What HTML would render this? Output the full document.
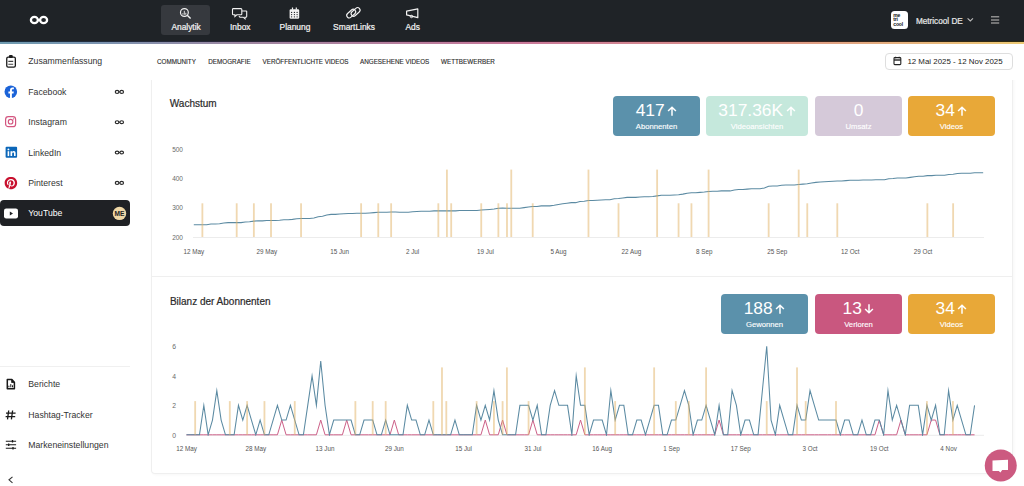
<!DOCTYPE html>
<html><head><meta charset="utf-8">
<style>
*{box-sizing:border-box;margin:0;padding:0}
html,body{width:1024px;height:486px;overflow:hidden;background:#fff;font-family:"Liberation Sans",sans-serif;color:#222}
.a{position:absolute;white-space:nowrap}
#hdr{position:absolute;left:0;top:0;width:1024px;height:41px;background:#1f2327}
#hl1{position:absolute;left:0;top:41px;width:1024px;height:1px;background:linear-gradient(90deg,#1c3142,#2e2436 30%,#3a2030 50%,#3a2424 75%,#2e2a10)}
#hl2{position:absolute;left:0;top:42px;width:1024px;height:2px;background:linear-gradient(90deg,#6f9bb0 0%,#7b93b0 10%,#9e86a1 24%,#c8789a 50%,#dc9388 74%,#ecc974 100%)}
.nav{color:#f2f2f2;font-weight:400;font-size:8.4px;line-height:8px;-webkit-text-stroke:0.22px #f2f2f2}
.side{font-size:8.7px;line-height:10px;color:#333}
.tab{font-size:6.3px;line-height:9px;color:#2a2a2a;letter-spacing:0;-webkit-text-stroke:0.12px #2a2a2a}
.stat{position:absolute;border-radius:4px;color:#fff;text-align:center}
.stat .n{position:absolute;left:0;right:0;top:5.5px;font-size:17.4px;line-height:17px;display:flex;justify-content:center;align-items:center}
.stat .n svg{margin-left:2.6px;margin-top:1px}
.stat .l{position:absolute;left:0;right:0;top:25.5px;font-size:7.7px;line-height:9px;-webkit-text-stroke:0.12px #fff}
svg text{font-family:"Liberation Sans",sans-serif}
</style></head><body>
<div id="hdr"></div><div id="hl1"></div><div id="hl2"></div>
<!-- logo -->
<svg class="a" style="left:0;top:0" width="60" height="41">
<ellipse cx="34.4" cy="20" rx="3.5" ry="3.05" fill="none" stroke="#fff" stroke-width="2.3"/>
<ellipse cx="43.6" cy="20" rx="3.5" ry="3.05" fill="none" stroke="#fff" stroke-width="2.3"/>
<rect x="37.5" y="19" width="3" height="2" fill="#fff"/>
</svg>
<!-- nav -->
<div class="a" style="left:161px;top:5px;width:49px;height:30px;border-radius:3px;background:#36393e"></div>
<svg class="a" style="left:150px;top:0" width="290" height="41" fill="none" stroke="#f2f2f2" stroke-width="1.1">
 <circle cx="34.4" cy="12.5" r="3.9" stroke-width="1.2"/><path d="M37.2 15.3L40.6 18.6" stroke-width="1.4"/>
 <path d="M32.9 14.6v-1.4M34.3 14.8v-4M35.8 14.8v-2" stroke-width="0.9"/>
 <path d="M83.3 8.6h7.7a0.8 0.8 0 0 1 .8.8v4.6a0.8 0.8 0 0 1-.8.8h-4.2l-1.9 1.7v-1.7h-1.6a0.8 0.8 0 0 1-.8-.8v-4.6a0.8 0.8 0 0 1 .8-.8z"/><path d="M91.9 11h4.2a0.6 0.6 0 0 1 .6.6v5a0.6 0.6 0 0 1-.6.6h-1.1v1.6l-1.8-1.6h-3.3l-1-1"/>
 <rect x="139.6" y="9.2" width="9.6" height="9.6" rx="1.2" fill="#f2f2f2" stroke="none"/>
 <path d="M142.5 7.6v2.2M146.3 7.6v2.2" stroke-width="1.2"/>
 <g fill="#1f2327" stroke="none"><circle cx="141.6" cy="12.4" r="0.65"/><circle cx="144.4" cy="12.4" r="0.65"/><circle cx="147.1" cy="12.4" r="0.65"/><circle cx="141.6" cy="14.6" r="0.65"/><circle cx="144.4" cy="14.6" r="0.65"/><circle cx="147.1" cy="14.6" r="0.65"/><circle cx="141.6" cy="16.8" r="0.65"/><circle cx="144.4" cy="16.8" r="0.65"/><circle cx="147.1" cy="16.8" r="0.65"/></g>
 <rect x="-5.1" y="-2.5" width="10.2" height="5" rx="2.5" transform="translate(201.2 13.6) rotate(-42)" stroke-width="1.15"/>
 <rect x="-5.1" y="-2.5" width="10.2" height="5" rx="2.5" transform="translate(205.6 11.9) rotate(-42)" stroke-width="1.15"/>
 <path d="M256.6 11.2L267.8 8.8V17.7L256.6 14.9Z" stroke-width="1.2" stroke-linejoin="round"/><circle cx="261.5" cy="16.5" r="1.2" stroke-width="1"/>
</svg>
<div class="a nav" style="left:171.4px;top:23px">Analytik</div>
<div class="a nav" style="left:230px;top:23px">Inbox</div>
<div class="a nav" style="left:279.6px;top:23px">Planung</div>
<div class="a nav" style="left:333.1px;top:23px">SmartLinks</div>
<div class="a nav" style="left:405.4px;top:23px">Ads</div>
<!-- right header -->
<div class="a" style="left:891px;top:11px;width:17px;height:18px;border-radius:3.5px;background:#fff"></div>
<div class="a" style="left:893.3px;top:12.6px;font-size:5px;line-height:4.6px;font-weight:700;color:#111;white-space:normal;width:14px;letter-spacing:-0.15px">me<br>tri<br>cool</div>
<div class="a nav" style="left:915.9px;top:17.5px;font-size:8.2px;color:#e6e6e6;-webkit-text-stroke:0.22px #e6e6e6">Metricool DE</div>
<svg class="a" style="left:960px;top:10px" width="50" height="20" fill="none" stroke="#bdbdbd" stroke-width="1">
 <path d="M7.6 8.3l2.7 2.6 2.7-2.6" stroke-width="1.1"/>
 <path d="M31 6.8h8.2M31 10h8.2M31 12.9h8.2" stroke="#8e8e8e" stroke-width="1.5"/>
</svg>
<!-- sidebar -->
<svg class="a" style="left:0;top:48px" width="140" height="420">
 <!-- clipboard -->
 <g fill="none" stroke="#1a1a1a" stroke-width="1.3"><rect x="6.75" y="9.1" width="8.6" height="10" rx="1.4"/><path d="M8.3 13.4h4.9M8.3 16.2h4.9" stroke-width="1.1" stroke="#444"/></g>
 <rect x="8.9" y="7" width="3.9" height="3" rx="1.2" fill="#1a1a1a"/>
 <!-- facebook -->
 <circle cx="10.8" cy="43.7" r="6.3" fill="#1b63d8"/>
 <path d="M11.9 50v-4.6h1.6l.3-1.9h-1.9v-1.2c0-.6.3-1 1.1-1h.9v-1.7c-.3 0-.9-.1-1.5-.1-1.5 0-2.4.9-2.4 2.5v1.5h-1.6v1.9h1.6V50z" fill="#fff"/>
 <!-- instagram -->
 <rect x="5.6" y="68.7" width="10" height="10" rx="2.8" fill="none" stroke="#d3557f" stroke-width="1.2"/>
 <circle cx="10.6" cy="73.7" r="2.3" fill="none" stroke="#d3557f" stroke-width="1.1"/>
 <circle cx="13.5" cy="70.9" r="0.6" fill="#d3557f"/>
 <!-- linkedin -->
 <rect x="5.6" y="98.7" width="11.5" height="11" rx="1" fill="#0b66b8"/>
 <path d="M7.6 103.2h1.6v4.9H7.6z" fill="#fff"/><circle cx="8.4" cy="101.4" r="0.95" fill="#fff"/>
 <path d="M10.5 103.2h1.5v.7c.3-.5.9-.85 1.7-.85 1.3 0 1.9.8 1.9 2.2v2.85h-1.6v-2.6c0-.7-.25-1.1-.85-1.1s-1 .4-1 1.1v2.6h-1.65z" fill="#fff"/>
 <!-- pinterest -->
 <circle cx="10.9" cy="135" r="6" fill="#fff"/>
 <path transform="translate(4.6 128.7) scale(0.525)" fill="#c8102e" d="M12.017 0C5.396 0 .029 5.367.029 11.987c0 5.079 3.158 9.417 7.618 11.162-.105-.949-.199-2.403.041-3.439.219-.937 1.406-5.957 1.406-5.957s-.359-.72-.359-1.781c0-1.663.967-2.911 2.168-2.911 1.024 0 1.518.769 1.518 1.688 0 1.029-.653 2.567-.992 3.992-.285 1.193.6 2.165 1.775 2.165 2.128 0 3.768-2.245 3.768-5.487 0-2.861-2.063-4.869-5.008-4.869-3.41 0-5.409 2.562-5.409 5.199 0 1.033.394 2.143.889 2.741.099.12.112.225.085.345-.09.375-.293 1.199-.334 1.363-.053.225-.172.271-.401.165-1.495-.69-2.433-2.878-2.433-4.646 0-3.776 2.748-7.252 7.920-7.252 4.158 0 7.392 2.967 7.392 6.923 0 4.135-2.607 7.462-6.233 7.462-1.214 0-2.354-.629-2.758-1.379l-.749 2.848c-.269 1.045-1.004 2.352-1.498 3.146 1.123.345 2.306.535 3.55.535 6.607 0 11.985-5.365 11.985-11.987C23.97 5.39 18.592.026 11.985.026L12.017 0z"/>
</svg>
<div class="a side" style="left:28.3px;top:56px">Zusammenfassung</div>
<div class="a side" style="left:28.3px;top:87px">Facebook</div>
<div class="a side" style="left:28.3px;top:117px">Instagram</div>
<div class="a side" style="left:28.3px;top:148px">LinkedIn</div>
<div class="a side" style="left:28.3px;top:178px">Pinterest</div>
<svg class="a" style="left:110px;top:80px" width="20" height="110" fill="none" stroke="#2b2b2b" stroke-width="1.2"><ellipse cx="7.1" cy="11.9" rx="1.8" ry="1.45"/><ellipse cx="11.7" cy="11.9" rx="1.8" ry="1.45"/><path d="M8.9 11.9h1" stroke-width="1"/><ellipse cx="7.1" cy="42.2" rx="1.8" ry="1.45"/><ellipse cx="11.7" cy="42.2" rx="1.8" ry="1.45"/><path d="M8.9 42.2h1" stroke-width="1"/><ellipse cx="7.1" cy="72.5" rx="1.8" ry="1.45"/><ellipse cx="11.7" cy="72.5" rx="1.8" ry="1.45"/><path d="M8.9 72.5h1" stroke-width="1"/><ellipse cx="7.1" cy="102.9" rx="1.8" ry="1.45"/><ellipse cx="11.7" cy="102.9" rx="1.8" ry="1.45"/><path d="M8.9 102.9h1" stroke-width="1"/></svg>
<div class="a" style="left:0;top:200px;width:130px;height:26px;border-radius:4px;background:#1f2125"></div>
<svg class="a" style="left:0;top:200px" width="130" height="26">
 <rect x="4" y="8.4" width="14" height="10" rx="2.2" fill="#fff"/>
 <path d="M9.8 11.4v4l3.2-2z" fill="#1f2125"/>
 <circle cx="119.5" cy="13.4" r="6.7" fill="#efd7a6"/>
 <text x="119.5" y="15.9" font-size="6.6" font-weight="700" fill="#222" text-anchor="middle">ME</text>
</svg>
<div class="a side" style="left:28.3px;top:208px;color:#fff">YouTube</div>
<div class="a" style="left:0;top:366px;width:130px;height:1px;background:#f0f0f0"></div>
<svg class="a" style="left:0;top:370px" width="30" height="116" fill="none" stroke="#1a1a1a" stroke-width="1.2">
 <path d="M7.3 9.6h4.6l2.5 2.6v6.6h-7.1z" stroke-width="1.5" stroke-linejoin="round"/><path d="M11.6 9.6v2.9h2.8z" fill="#1a1a1a" stroke-width="0.8"/><path d="M8.9 17.3v-1.6M10.8 17.3v-3.2M12.5 17.3v-2" stroke-width="1"/>
 <path d="M8.7 40.5l-1.2 8.8M12.6 40.5l-1.2 8.8M6 43.2h9.6M5.6 46.6h9.6" stroke-width="1.3"/>
 <path d="M5.8 71.3h10.3M5.8 74.8h10.3M5.8 78.2h10.3" stroke-width="1.1"/>
 <path d="M12.5 70v2.6M8.7 73.5v2.6M13 77v2.6" stroke-width="1.3"/>
 <path d="M12.5 106.8l-3.5 3 3.5 3" stroke="#333" stroke-width="1.1"/>
</svg>
<div class="a side" style="left:28.3px;top:379px">Berichte</div>
<div class="a side" style="left:28.3px;top:410px">Hashtag-Tracker</div>
<div class="a side" style="left:28.3px;top:440px">Markeneinstellungen</div>
<!-- tabs -->
<div class="a tab" style="left:157px;top:57px">COMMUNITY</div>
<div class="a tab" style="left:208.3px;top:57px">DEMOGRAFIE</div>
<div class="a tab" style="left:262.5px;top:57px">VERÖFFENTLICHTE VIDEOS</div>
<div class="a tab" style="left:360px;top:57px">ANGESEHENE VIDEOS</div>
<div class="a tab" style="left:441px;top:57px">WETTBEWERBER</div>
<!-- date picker -->
<div class="a" style="left:885px;top:53px;width:128px;height:17px;border:1px solid #dedede;border-radius:4px;background:#fff"></div>
<svg class="a" style="left:890px;top:53px" width="16" height="17" fill="none" stroke="#222" stroke-width="1.1">
 <rect x="4" y="4.6" width="6.8" height="7" rx="0.8"/><path d="M4 7h6.8" stroke-width="1.4"/><path d="M5.6 3.7v1.6M9.2 3.7v1.6"/>
</svg>
<div class="a" style="left:907.4px;top:56.5px;font-size:7.9px;line-height:10px;color:#222">12 Mai 2025 - 12 Nov 2025</div>
<!-- card -->
<div class="a" style="left:151px;top:60px;width:862px;height:414px;border:1px solid #efefef;border-top:none;border-radius:0 0 4px 4px;background:transparent;box-shadow:1px 1px 3px rgba(0,0,0,0.035);clip-path:inset(20px -6px -6px -6px)"></div>
<div class="a" style="left:152px;top:276px;width:860px;height:1px;background:#efefef"></div>
<div class="a" style="left:169.8px;top:97.5px;font-size:10px;line-height:12px;color:#2a2a2a;-webkit-text-stroke:0.2px #2a2a2a">Wachstum</div>
<div class="a" style="left:169.9px;top:295.5px;font-size:10px;line-height:12px;color:#2a2a2a;-webkit-text-stroke:0.2px #2a2a2a">Bilanz der Abonnenten</div>
<!-- stats row 1 -->
<div class="stat" style="left:613px;top:96px;width:87px;height:40px;background:#5b91ab"><div class="n">417<svg width="10" height="10" viewBox="0 0 10 10" fill="none" stroke="#fff" stroke-width="1.5"><path d="M5 9.8V1.2M1.1 5l3.9-3.8 3.9 3.8"/></svg></div><div class="l">Abonnenten</div></div>
<div class="stat" style="left:706px;top:96px;width:102px;height:40px;background:#c5e8dc"><div class="n">317.36K<svg width="10" height="10" viewBox="0 0 10 10" fill="none" stroke="#fff" stroke-width="1.5"><path d="M5 9.8V1.2M1.1 5l3.9-3.8 3.9 3.8"/></svg></div><div class="l">Videoansichten</div></div>
<div class="stat" style="left:815px;top:96px;width:87px;height:40px;background:#d5c9d9"><div class="n">0</div><div class="l">Umsatz</div></div>
<div class="stat" style="left:908px;top:96px;width:87px;height:40px;background:#e8a838"><div class="n">34<svg width="10" height="10" viewBox="0 0 10 10" fill="none" stroke="#fff" stroke-width="1.5"><path d="M5 9.8V1.2M1.1 5l3.9-3.8 3.9 3.8"/></svg></div><div class="l">Videos</div></div>
<!-- stats row 2 -->
<div class="stat" style="left:721px;top:294px;width:87px;height:40px;background:#5b91ab"><div class="n">188<svg width="10" height="10" viewBox="0 0 10 10" fill="none" stroke="#fff" stroke-width="1.5"><path d="M5 9.8V1.2M1.1 5l3.9-3.8 3.9 3.8"/></svg></div><div class="l">Gewonnen</div></div>
<div class="stat" style="left:815px;top:294px;width:87px;height:40px;background:#c9577f"><div class="n">13<svg width="10" height="10" viewBox="0 0 10 10" fill="none" stroke="#fff" stroke-width="1.5"><path d="M5 0.2V8.8M1.1 5l3.9 3.8 3.9-3.8"/></svg></div><div class="l">Verloren</div></div>
<div class="stat" style="left:908px;top:294px;width:87px;height:40px;background:#e8a838"><div class="n">34<svg width="10" height="10" viewBox="0 0 10 10" fill="none" stroke="#fff" stroke-width="1.5"><path d="M5 9.8V1.2M1.1 5l3.9-3.8 3.9 3.8"/></svg></div><div class="l">Videos</div></div>
<!-- charts -->
<svg class="a" style="left:0;top:0" width="1024" height="486">
 <defs><clipPath id="cp2"><rect x="150" y="300" width="860" height="135.9"/></clipPath></defs>
 <line x1="193" y1="237.5" x2="984" y2="237.5" stroke="#ececec" stroke-width="1"/>
 <g fill="#6a6a6a" font-size="6.5" text-anchor="end"><text x="183" y="239.60">200</text><text x="183" y="210.23">300</text><text x="183" y="180.87">400</text><text x="183" y="151.50">500</text></g>
 <g fill="#555" font-size="6.3" text-anchor="middle"><text x="193.80" y="253.5">12 May</text><text x="266.73" y="253.5">29 May</text><text x="339.66" y="253.5">15 Jun</text><text x="412.59" y="253.5">2 Jul</text><text x="485.52" y="253.5">19 Jul</text><text x="558.45" y="253.5">5 Aug</text><text x="631.38" y="253.5">22 Aug</text><text x="704.31" y="253.5">8 Sep</text><text x="777.24" y="253.5">25 Sep</text><text x="850.17" y="253.5">12 Oct</text><text x="923.10" y="253.5">29 Oct</text></g>
 <polyline points="193.80,224.67 198.09,224.67 202.38,224.67 206.67,224.67 210.96,224.08 215.25,224.08 219.54,223.78 223.83,222.90 228.12,222.61 232.41,222.61 236.70,222.61 240.99,222.61 245.28,222.02 249.57,221.73 253.86,221.14 258.15,220.85 262.44,220.85 266.73,220.55 271.02,220.55 275.31,220.55 279.60,220.26 283.89,219.67 288.18,219.67 292.47,219.38 296.76,218.79 301.05,218.50 305.34,218.50 309.63,218.50 313.92,217.91 318.21,216.74 322.50,216.15 326.79,214.97 331.08,214.39 335.37,214.39 339.66,214.09 343.95,213.80 348.24,213.51 352.53,213.51 356.82,213.21 361.11,213.21 365.40,213.21 369.69,212.92 373.98,212.63 378.27,212.33 382.56,212.33 386.85,212.33 391.14,212.04 395.43,212.04 399.72,212.33 404.01,212.33 408.30,212.33 412.59,211.74 416.88,211.45 421.17,211.16 425.46,211.16 429.75,211.16 434.04,210.86 438.33,210.86 442.62,210.86 446.91,210.86 451.20,210.86 455.49,210.86 459.78,210.57 464.07,210.57 468.36,210.57 472.65,210.57 476.94,210.57 481.23,209.98 485.52,209.69 489.81,209.40 494.10,209.10 498.39,208.22 502.68,207.93 506.97,208.22 511.26,208.22 515.55,208.22 519.84,208.22 524.13,207.63 528.42,207.05 532.71,206.46 537.00,206.46 541.29,205.87 545.58,205.87 549.87,205.87 554.16,205.28 558.45,204.40 562.74,203.82 567.03,203.23 571.32,202.64 575.61,202.64 579.90,201.47 584.19,201.17 588.48,200.59 592.77,200.59 597.06,200.29 601.35,200.00 605.64,199.70 609.93,199.70 614.22,198.82 618.51,198.53 622.80,197.94 627.09,197.36 631.38,197.36 635.67,197.36 639.96,197.06 644.25,196.77 648.54,196.77 652.83,196.47 657.12,195.89 661.41,195.30 665.70,195.30 669.99,195.30 674.28,195.01 678.57,194.71 682.86,194.12 687.15,193.24 691.44,192.66 695.73,192.66 700.02,192.36 704.31,192.07 708.60,191.48 712.89,191.19 717.18,191.19 721.47,190.89 725.76,190.89 730.05,190.89 734.34,190.01 738.63,189.43 742.92,189.43 747.21,189.13 751.50,188.84 755.79,188.84 760.08,188.84 764.37,187.96 768.66,186.20 772.95,185.90 777.24,185.90 781.53,185.31 785.82,185.02 790.11,185.02 794.40,185.02 798.69,184.43 802.98,184.14 807.27,183.85 811.56,182.97 815.85,182.38 820.14,182.08 824.43,181.79 828.72,181.50 833.01,181.20 837.30,180.91 841.59,180.91 845.88,180.62 850.17,180.32 854.46,180.32 858.75,180.32 863.04,180.03 867.33,180.03 871.62,180.03 875.91,179.74 880.20,179.74 884.49,179.74 888.78,178.85 893.07,178.56 897.36,177.97 901.65,177.97 905.94,177.97 910.23,177.39 914.52,176.80 918.81,176.21 923.10,176.21 927.39,175.62 931.68,175.62 935.97,175.33 940.26,175.33 944.55,175.33 948.84,174.45 953.13,174.16 957.42,173.57 961.71,173.27 966.00,173.27 970.29,173.27 974.58,172.69 978.87,172.69 983.16,172.69" fill="none" stroke="#5b8aa2" stroke-width="1.05" stroke-miterlimit="10"/>
 <g fill="rgba(226,178,100,0.5)"><rect x="201.48" y="203.30" width="1.8" height="33.70"/><rect x="235.80" y="203.30" width="1.8" height="33.70"/><rect x="252.96" y="203.30" width="1.8" height="33.70"/><rect x="270.12" y="203.30" width="1.8" height="33.70"/><rect x="300.15" y="203.30" width="1.8" height="33.70"/><rect x="360.21" y="203.30" width="1.8" height="33.70"/><rect x="377.37" y="203.30" width="1.8" height="33.70"/><rect x="390.24" y="203.30" width="1.8" height="33.70"/><rect x="437.43" y="203.30" width="1.8" height="33.70"/><rect x="450.30" y="203.30" width="1.8" height="33.70"/><rect x="480.33" y="203.30" width="1.8" height="33.70"/><rect x="497.49" y="203.30" width="1.8" height="33.70"/><rect x="506.07" y="203.30" width="1.8" height="33.70"/><rect x="531.81" y="203.30" width="1.8" height="33.70"/><rect x="617.61" y="203.30" width="1.8" height="33.70"/><rect x="677.67" y="203.30" width="1.8" height="33.70"/><rect x="690.54" y="203.30" width="1.8" height="33.70"/><rect x="767.76" y="203.30" width="1.8" height="33.70"/><rect x="806.37" y="203.30" width="1.8" height="33.70"/><rect x="836.40" y="203.30" width="1.8" height="33.70"/><rect x="926.49" y="203.30" width="1.8" height="33.70"/><rect x="952.23" y="203.30" width="1.8" height="33.70"/><rect x="446.01" y="169.60" width="1.8" height="67.40"/><rect x="510.36" y="169.60" width="1.8" height="67.40"/><rect x="587.58" y="169.60" width="1.8" height="67.40"/><rect x="656.22" y="169.60" width="1.8" height="67.40"/><rect x="707.70" y="169.60" width="1.8" height="67.40"/><rect x="797.79" y="169.60" width="1.8" height="67.40"/></g>
 <line x1="186" y1="435.3" x2="984" y2="435.3" stroke="#ececec" stroke-width="1"/>
 <g fill="#6a6a6a" font-size="6.8" text-anchor="end"><text x="176" y="437.50">0</text><text x="176" y="408.00">2</text><text x="176" y="378.50">4</text><text x="176" y="349.00">6</text></g>
 <g fill="#555" font-size="6.3" text-anchor="middle"><text x="186.50" y="451">12 May</text><text x="255.78" y="451">28 May</text><text x="325.06" y="451">13 Jun</text><text x="394.34" y="451">29 Jun</text><text x="463.62" y="451">15 Jul</text><text x="532.90" y="451">31 Jul</text><text x="602.18" y="451">16 Aug</text><text x="671.46" y="451">1 Sep</text><text x="740.74" y="451">17 Sep</text><text x="810.02" y="451">3 Oct</text><text x="879.30" y="451">19 Oct</text><text x="948.58" y="451">4 Nov</text></g>
 <polyline clip-path="url(#cp2)" points="186.50,434.80 190.83,434.80 195.16,434.80 199.49,434.80 203.82,434.80 208.15,434.80 212.48,434.80 216.81,434.80 221.14,434.80 225.47,434.80 229.80,434.80 234.13,434.80 238.46,434.80 242.79,434.80 247.12,434.80 251.45,434.80 255.78,434.80 260.11,434.80 264.44,434.80 268.77,434.80 273.10,434.80 277.43,434.80 281.76,420.05 286.09,434.80 290.42,434.80 294.75,434.80 299.08,434.80 303.41,434.80 307.74,434.80 312.07,434.80 316.40,434.80 320.73,420.05 325.06,434.80 329.39,434.80 333.72,434.80 338.05,434.80 342.38,434.80 346.71,420.05 351.04,434.80 355.37,434.80 359.70,434.80 364.03,434.80 368.36,434.80 372.69,434.80 377.02,434.80 381.35,434.80 385.68,434.80 390.01,434.80 394.34,420.05 398.67,434.80 403.00,434.80 407.33,434.80 411.66,434.80 415.99,434.80 420.32,434.80 424.65,434.80 428.98,434.80 433.31,434.80 437.64,434.80 441.97,434.80 446.30,434.80 450.63,434.80 454.96,434.80 459.29,434.80 463.62,434.80 467.95,434.80 472.28,434.80 476.61,434.80 480.94,434.80 485.27,420.05 489.60,434.80 493.93,434.80 498.26,434.80 502.59,420.05 506.92,434.80 511.25,434.80 515.58,434.80 519.91,434.80 524.24,434.80 528.57,434.80 532.90,420.05 537.23,434.80 541.56,434.80 545.89,434.80 550.22,434.80 554.55,434.80 558.88,434.80 563.21,434.80 567.54,434.80 571.87,434.80 576.20,434.80 580.53,420.05 584.86,434.80 589.19,434.80 593.52,434.80 597.85,434.80 602.18,434.80 606.51,434.80 610.84,434.80 615.17,434.80 619.50,434.80 623.83,434.80 628.16,434.80 632.49,434.80 636.82,434.80 641.15,434.80 645.48,434.80 649.81,434.80 654.14,434.80 658.47,434.80 662.80,434.80 667.13,434.80 671.46,434.80 675.79,434.80 680.12,434.80 684.45,434.80 688.78,434.80 693.11,434.80 697.44,434.80 701.77,434.80 706.10,434.80 710.43,434.80 714.76,434.80 719.09,420.05 723.42,434.80 727.75,434.80 732.08,434.80 736.41,434.80 740.74,434.80 745.07,434.80 749.40,434.80 753.73,434.80 758.06,434.80 762.39,434.80 766.72,434.80 771.05,434.80 775.38,434.80 779.71,434.80 784.04,434.80 788.37,434.80 792.70,434.80 797.03,434.80 801.36,434.80 805.69,434.80 810.02,434.80 814.35,434.80 818.68,434.80 823.01,434.80 827.34,434.80 831.67,434.80 836.00,434.80 840.33,434.80 844.66,434.80 848.99,434.80 853.32,434.80 857.65,434.80 861.98,434.80 866.31,434.80 870.64,434.80 874.97,434.80 879.30,420.05 883.63,434.80 887.96,434.80 892.29,434.80 896.62,434.80 900.95,420.05 905.28,434.80 909.61,434.80 913.94,434.80 918.27,434.80 922.60,434.80 926.93,434.80 931.26,420.05 935.59,420.05 939.92,434.80 944.25,434.80 948.58,434.80 952.91,434.80 957.24,434.80 961.57,434.80 965.90,434.80 970.23,434.80 974.56,434.80" fill="none" stroke="#cc6088" stroke-width="1" stroke-miterlimit="10"/>
 <polyline clip-path="url(#cp2)" points="186.50,434.80 190.83,434.80 195.16,434.80 199.49,434.80 203.82,405.30 208.15,434.80 212.48,420.05 216.81,390.55 221.14,420.05 225.47,434.80 229.80,434.80 234.13,434.80 238.46,405.30 242.79,420.05 247.12,405.30 251.45,420.05 255.78,434.80 260.11,420.05 264.44,434.80 268.77,434.80 273.10,420.05 277.43,405.30 281.76,420.05 286.09,420.05 290.42,405.30 294.75,420.05 299.08,434.80 303.41,434.80 307.74,405.30 312.07,375.80 316.40,405.30 320.73,361.05 325.06,405.30 329.39,434.80 333.72,420.05 338.05,420.05 342.38,420.05 346.71,420.05 351.04,420.05 355.37,434.80 359.70,434.80 364.03,420.05 368.36,420.05 372.69,420.05 377.02,434.80 381.35,434.80 385.68,420.05 390.01,434.80 394.34,434.80 398.67,434.80 403.00,434.80 407.33,405.30 411.66,420.05 415.99,420.05 420.32,434.80 424.65,434.80 428.98,420.05 433.31,434.80 437.64,434.80 441.97,434.80 446.30,434.80 450.63,434.80 454.96,420.05 459.29,434.80 463.62,434.80 467.95,434.80 472.28,434.80 476.61,405.30 480.94,420.05 485.27,405.30 489.60,420.05 493.93,390.55 498.26,420.05 502.59,434.80 506.92,434.80 511.25,434.80 515.58,434.80 519.91,405.30 524.24,405.30 528.57,405.30 532.90,420.05 537.23,405.30 541.56,434.80 545.89,434.80 550.22,405.30 554.55,390.55 558.88,405.30 563.21,405.30 567.54,405.30 571.87,434.80 576.20,375.80 580.53,405.30 584.86,405.30 589.19,434.80 593.52,420.05 597.85,420.05 602.18,420.05 606.51,434.80 610.84,390.55 615.17,420.05 619.50,405.30 623.83,405.30 628.16,434.80 632.49,434.80 636.82,420.05 641.15,420.05 645.48,434.80 649.81,420.05 654.14,405.30 658.47,405.30 662.80,434.80 667.13,434.80 671.46,420.05 675.79,420.05 680.12,405.30 684.45,390.55 688.78,405.30 693.11,434.80 697.44,420.05 701.77,420.05 706.10,405.30 710.43,420.05 714.76,434.80 719.09,405.30 723.42,434.80 727.75,434.80 732.08,390.55 736.41,405.30 740.74,434.80 745.07,420.05 749.40,420.05 753.73,434.80 758.06,434.80 762.39,390.55 766.72,346.30 771.05,420.05 775.38,434.80 779.71,405.30 784.04,420.05 788.37,434.80 792.70,434.80 797.03,405.30 801.36,420.05 805.69,420.05 810.02,390.55 814.35,405.30 818.68,420.05 823.01,420.05 827.34,420.05 831.67,420.05 836.00,420.05 840.33,434.80 844.66,420.05 848.99,420.05 853.32,434.80 857.65,434.80 861.98,420.05 866.31,434.80 870.64,434.80 874.97,420.05 879.30,420.05 883.63,434.80 887.96,390.55 892.29,420.05 896.62,405.30 900.95,420.05 905.28,434.80 909.61,405.30 913.94,405.30 918.27,405.30 922.60,434.80 926.93,405.30 931.26,420.05 935.59,405.30 939.92,434.80 944.25,434.80 948.58,390.55 952.91,420.05 957.24,405.30 961.57,420.05 965.90,434.80 970.23,434.80 974.56,405.30" fill="none" stroke="#5b8aa2" stroke-width="1.05" stroke-miterlimit="10"/>
 <g fill="rgba(226,178,100,0.5)"><rect x="194.26" y="401.10" width="1.8" height="33.70"/><rect x="228.90" y="401.10" width="1.8" height="33.70"/><rect x="246.22" y="401.10" width="1.8" height="33.70"/><rect x="263.54" y="401.10" width="1.8" height="33.70"/><rect x="293.85" y="401.10" width="1.8" height="33.70"/><rect x="354.47" y="401.10" width="1.8" height="33.70"/><rect x="371.79" y="401.10" width="1.8" height="33.70"/><rect x="384.78" y="401.10" width="1.8" height="33.70"/><rect x="432.41" y="401.10" width="1.8" height="33.70"/><rect x="445.40" y="401.10" width="1.8" height="33.70"/><rect x="475.71" y="401.10" width="1.8" height="33.70"/><rect x="493.03" y="401.10" width="1.8" height="33.70"/><rect x="501.69" y="401.10" width="1.8" height="33.70"/><rect x="527.67" y="401.10" width="1.8" height="33.70"/><rect x="614.27" y="401.10" width="1.8" height="33.70"/><rect x="674.89" y="401.10" width="1.8" height="33.70"/><rect x="687.88" y="401.10" width="1.8" height="33.70"/><rect x="765.82" y="401.10" width="1.8" height="33.70"/><rect x="804.79" y="401.10" width="1.8" height="33.70"/><rect x="835.10" y="401.10" width="1.8" height="33.70"/><rect x="926.03" y="401.10" width="1.8" height="33.70"/><rect x="952.01" y="401.10" width="1.8" height="33.70"/><rect x="441.07" y="367.40" width="1.8" height="67.40"/><rect x="506.02" y="367.40" width="1.8" height="67.40"/><rect x="583.96" y="367.40" width="1.8" height="67.40"/><rect x="653.24" y="367.40" width="1.8" height="67.40"/><rect x="705.20" y="367.40" width="1.8" height="67.40"/><rect x="796.13" y="367.40" width="1.8" height="67.40"/></g>
</svg>
<!-- chat bubble -->
<svg class="a" style="left:980px;top:445px" width="44" height="41">
 <circle cx="20.75" cy="20.5" r="16" fill="#cc5a80"/>
 <path d="M12.5 15.5L28 14.8V25H22.2L20.4 27.6 18.8 25.9H12.5Z" fill="#fff"/>
</svg>
</body></html>
